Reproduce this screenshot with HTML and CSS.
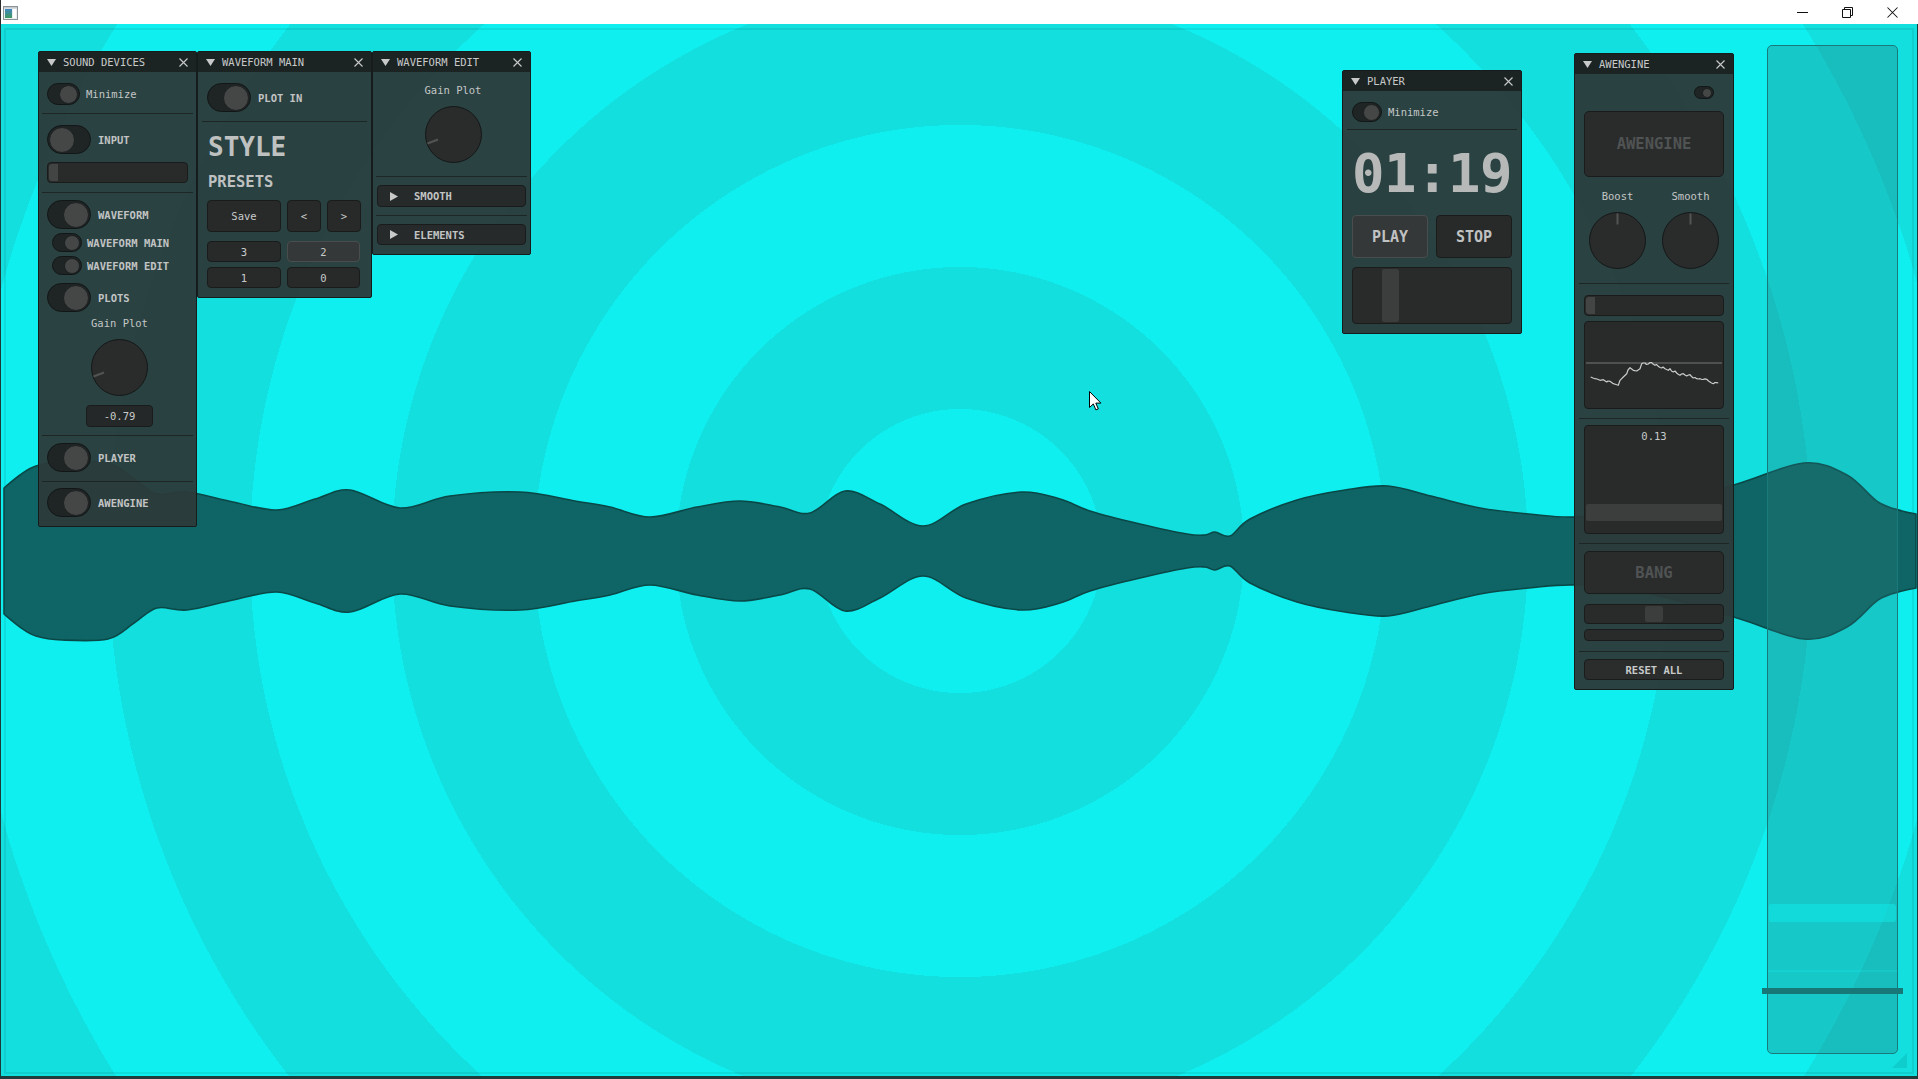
FILE: index.html
```html
<!DOCTYPE html>
<html>
<head>
<meta charset="utf-8">
<title>Sound</title>
<link rel="stylesheet" href="styles.css">
</head>
<body>
<div class="app">
  <div class="titlebar">
    <svg class="appicon" width="15" height="14" viewBox="0 0 15 14">
      <defs><linearGradient id="ig" x1="0" y1="0" x2="0" y2="1"><stop offset="0" stop-color="#3f86c0"/><stop offset="1" stop-color="#3f9a5e"/></linearGradient></defs>
      <rect x="0.5" y="0.5" width="14" height="13" fill="#e8eef2" stroke="#8c9296"/>
      <rect x="2" y="3" width="7" height="9" fill="url(#ig)"/>
      <rect x="10" y="3" width="3" height="9" fill="#ffffff"/>
      <rect x="1" y="1" width="13" height="1.5" fill="#c2cad0"/>
    </svg>
    <div class="winctl">
      <div class="wc"><svg width="11" height="11" viewBox="0 0 11 11"><path d="M0 5.5H11" stroke="#111" stroke-width="1"/></svg></div>
      <div class="wc"><svg width="11" height="11" viewBox="0 0 11 11"><path d="M0.5 2.5H8.5V10.5H0.5Z M2.5 2.5V0.5H10.5V8.5H8.5" fill="none" stroke="#111" stroke-width="1"/></svg></div>
      <div class="wc"><svg width="11" height="11" viewBox="0 0 11 11"><path d="M0.5 0.5L10.5 10.5M10.5 0.5L0.5 10.5" stroke="#111" stroke-width="1.05"/></svg></div>
    </div>
  </div>

  <div class="canvas">
    <div class="frame"></div>
    <svg class="wave" viewBox="0 24 1918 1052" preserveAspectRatio="none">
      <path id="wavepath" d="M0 0" fill="#0f6565" stroke="#0a4848" stroke-width="1.6" stroke-linejoin="round"/>
    </svg>

    <div class="track">
      <div class="thumbband"></div>
      <div class="tline"></div>
      <div class="tbar"></div>
    </div>

    <svg class="grip" width="15" height="15" viewBox="0 0 15 15"><path d="M15 0V15H0Z" fill="rgba(0,110,110,0.16)"/></svg>

    <!-- SOUND DEVICES -->
    <div class="panel p-sd">
      <div class="phead">
        <svg class="tri" width="9" height="7" viewBox="0 0 9 7"><path d="M0 0H9L4.5 7Z" fill="#c8caca"/></svg>
        <span class="ptitle">SOUND DEVICES</span>
        <svg class="pclose" width="9" height="9" viewBox="0 0 9 9"><path d="M0.5 0.5L8.5 8.5M8.5 0.5L0.5 8.5" stroke="#c8caca" stroke-width="1.1"/></svg>
      </div>
      <div class="pbody b-sd">
        <div class="row mt11"><div class="tg tg-s on"><span class="kn"></span></div><span class="lb">Minimize</span></div>
        <div class="sep sep-sd mt8"></div>
        <div class="row mt11"><div class="tg tg-l"><span class="kn"></span></div><span class="lb b lbl-l">INPUT</span></div>
        <div class="hslider mt8"><span class="hgrab"></span></div>
        <div class="sep sep-sd mt9"></div>
        <div class="row mt7"><div class="tg tg-l on"><span class="kn"></span></div><span class="lb b lbl-l">WAVEFORM</span></div>
        <div class="row sub mt4"><div class="tg tg-m on"><span class="kn"></span></div><span class="lb b">WAVEFORM MAIN</span></div>
        <div class="row sub mt4"><div class="tg tg-m on"><span class="kn"></span></div><span class="lb b">WAVEFORM EDIT</span></div>
        <div class="row mt8"><div class="tg tg-l on"><span class="kn"></span></div><span class="lb b lbl-l">PLOTS</span></div>
        <div class="clabel shift mt5">Gain Plot</div>
        <div class="knob shift mt10">
          <svg width="57" height="57" viewBox="0 0 57 57"><circle cx="28.5" cy="28.5" r="28" fill="#2a2c2c" stroke="#151717"/><path d="M2.5 37.5L13 33.5" stroke="#525454" stroke-width="2"/></svg>
        </div>
        <div class="valbox shift mt9">-0.79</div>
        <div class="sep sep-sd mt8"></div>
        <div class="row mt7"><div class="tg tg-l on"><span class="kn"></span></div><span class="lb b lbl-l">PLAYER</span></div>
        <div class="sep sep-sd mt9"></div>
        <div class="row mt6"><div class="tg tg-l on"><span class="kn"></span></div><span class="lb b lbl-l">AWENGINE</span></div>
      </div>
    </div>

    <!-- WAVEFORM MAIN -->
    <div class="panel p-wm">
      <div class="phead">
        <svg class="tri" width="9" height="7" viewBox="0 0 9 7"><path d="M0 0H9L4.5 7Z" fill="#c8caca"/></svg>
        <span class="ptitle">WAVEFORM MAIN</span>
        <svg class="pclose" width="9" height="9" viewBox="0 0 9 9"><path d="M0.5 0.5L8.5 8.5M8.5 0.5L0.5 8.5" stroke="#c8caca" stroke-width="1.1"/></svg>
      </div>
      <div class="pbody b-wm">
        <div class="row mt11"><div class="tg tg-l on"><span class="kn"></span></div><span class="lb b lbl-l">PLOT IN</span></div>
        <div class="sep sep-wm mt9"></div>
        <div class="style-h mt12">STYLE</div>
        <div class="presets mt14">PRESETS</div>
        <div class="btnrow mt10">
          <div class="btn btn-save">Save</div>
          <div class="btn btn-sq">&lt;</div>
          <div class="btn btn-sq">&gt;</div>
        </div>
        <div class="pgrid mt9">
          <div class="btn cell">3</div>
          <div class="btn cell hi">2</div>
          <div class="btn cell">1</div>
          <div class="btn cell">0</div>
        </div>
      </div>
    </div>

    <!-- WAVEFORM EDIT -->
    <div class="panel p-we">
      <div class="phead">
        <svg class="tri" width="9" height="7" viewBox="0 0 9 7"><path d="M0 0H9L4.5 7Z" fill="#c8caca"/></svg>
        <span class="ptitle">WAVEFORM EDIT</span>
        <svg class="pclose" width="9" height="9" viewBox="0 0 9 9"><path d="M0.5 0.5L8.5 8.5M8.5 0.5L0.5 8.5" stroke="#c8caca" stroke-width="1.1"/></svg>
      </div>
      <div class="pbody b-we">
        <div class="clabel shift3 mt12">Gain Plot</div>
        <div class="knob shift3 mt10">
          <svg width="57" height="57" viewBox="0 0 57 57"><circle cx="28.5" cy="28.5" r="28" fill="#2a2c2c" stroke="#151717"/><path d="M2.5 37.5L13 33.5" stroke="#525454" stroke-width="2"/></svg>
        </div>
        <div class="sep sep-we mt13"></div>
        <div class="coll coll-a mt8">
          <svg width="9" height="9" viewBox="0 0 9 9"><path d="M0 0L8 4.5L0 9Z" fill="#c8caca"/></svg>
          <span class="lb b">SMOOTH</span>
        </div>
        <div class="sep sep-we mt8"></div>
        <div class="coll mt8">
          <svg width="9" height="9" viewBox="0 0 9 9"><path d="M0 0L8 4.5L0 9Z" fill="#c8caca"/></svg>
          <span class="lb b">ELEMENTS</span>
        </div>
      </div>
    </div>

    <!-- PLAYER -->
    <div class="panel p-pl">
      <div class="phead">
        <svg class="tri" width="9" height="7" viewBox="0 0 9 7"><path d="M0 0H9L4.5 7Z" fill="#c8caca"/></svg>
        <span class="ptitle">PLAYER</span>
        <svg class="pclose" width="9" height="9" viewBox="0 0 9 9"><path d="M0.5 0.5L8.5 8.5M8.5 0.5L0.5 8.5" stroke="#c8caca" stroke-width="1.1"/></svg>
      </div>
      <div class="pbody b-pl">
        <div class="row mt11"><div class="tg tg-p on"><span class="kn"></span></div><span class="lb">Minimize</span></div>
        <div class="sep sep-pl mt7"></div>
        <div class="clock mt17">01:19</div>
        <div class="btnrow2 mt14">
          <div class="btn pbtn hi">PLAY</div>
          <div class="btn pbtn">STOP</div>
        </div>
        <div class="pslider mt9"><span class="pgrab"></span></div>
      </div>
    </div>

    <!-- AWENGINE -->
    <div class="panel p-aw">
      <div class="phead">
        <svg class="tri" width="9" height="7" viewBox="0 0 9 7"><path d="M0 0H9L4.5 7Z" fill="#c8caca"/></svg>
        <span class="ptitle">AWENGINE</span>
        <svg class="pclose" width="9" height="9" viewBox="0 0 9 9"><path d="M0.5 0.5L8.5 8.5M8.5 0.5L0.5 8.5" stroke="#c8caca" stroke-width="1.1"/></svg>
      </div>
      <div class="pbody b-aw">
        <div class="tgrow mt12"><div class="tg tg-xs on"><span class="kn"></span></div></div>
        <div class="bigbox bb-aw mt12">AWENGINE</div>
        <div class="knobs mt13">
          <div class="kcol">
            <div class="clabel">Boost</div>
            <div class="knob mt10"><svg width="57" height="57" viewBox="0 0 57 57"><circle cx="28.5" cy="28.5" r="28" fill="#2a2c2c" stroke="#151717"/><path d="M28.5 1.5V12.5" stroke="#525454" stroke-width="2"/></svg></div>
          </div>
          <div class="kcol">
            <div class="clabel">Smooth</div>
            <div class="knob mt10"><svg width="57" height="57" viewBox="0 0 57 57"><circle cx="28.5" cy="28.5" r="28" fill="#2a2c2c" stroke="#151717"/><path d="M28.5 1.5V12.5" stroke="#525454" stroke-width="2"/></svg></div>
          </div>
        </div>
        <div class="sep sep-aw mt14"></div>
        <div class="hslider mt11"><span class="hgrab"></span></div>
        <div class="plot mt5">
          <svg class="plotsvg" width="139" height="88" viewBox="0 0 139 88">
            <path d="M2 42H138" stroke="#4f5151" stroke-width="2"/>
            <polyline fill="none" stroke="#c9cbcb" stroke-width="1.2" stroke-linejoin="round" points="6.7,56 9,57 11,57.7 13,58 16,59.3 19.3,58.7 22.7,61 24,60 26,60.3 29.3,62.7 32,63.5 34.3,64.3 36,59.3 39.3,56 42.7,52.7 44,49 46,46.7 49.3,49.3 52.7,50 56,47.7 57.7,42.7 59,42 61,42 62.5,43.5 64.3,43 66,41.5 67.7,41.7 69,43 71,44.3 72.5,43.5 74.3,45.3 76,46.5 77.7,47 79,46 81,47.7 82.5,48.5 84.3,49.3 86,47.7 87.5,50 89.3,51 91,50 92.7,52 94.5,53.5 96,54.3 97.5,53 99.3,52.7 101,54 102.7,55 104.5,54 106,53.7 107.5,55.5 109.3,57 111,56.5 112.7,57.7 114.5,58 116,57.7 118,58.5 119.3,58.3 121,57.8 122.7,58.3 124.5,60 126,61 127.5,62 129.3,62.7 131,61.5 132.7,61.7 134.3,62"/>
          </svg>
        </div>
        <div class="sep sep-aw mt9"></div>
        <div class="vslider mt6"><span class="vval">0.13</span><span class="vgrab"></span></div>
        <div class="sep sep-aw mt9"></div>
        <div class="bigbox bb-bang mt7">BANG</div>
        <div class="hslider2 mt10"><span class="cgrab"></span></div>
        <div class="thinbar mt5"></div>
        <div class="sep sep-aw mt10"></div>
        <div class="btn resetbtn mt7">RESET ALL</div>
      </div>
    </div>

    <svg class="cursor" width="13" height="21" viewBox="0 0 13 21"><path d="M0.5 0.5L0.5 16.5L4.3 12.9L6.9 18.9L9.3 17.9L6.8 12.1L11.9 12.1Z" fill="#ffffff" stroke="#000000" stroke-width="1" stroke-linejoin="miter"/></svg>
  </div>
</div>
<script src="app.js"></script>
</body>
</html>
```

FILE: styles.css
```css
* { box-sizing: border-box; margin: 0; padding: 0; }

html, body {
  width: 1918px;
  height: 1079px;
  overflow: hidden;
  background: #ffffff;
}

body {
  font-family: "DejaVu Sans Mono", "Liberation Mono", monospace;
  color: #c4c6c6;
}

.app {
  width: 1918px;
  height: 1079px;
  display: flex;
  flex-direction: column;
}

/* ---------- title bar ---------- */
.titlebar {
  height: 24px;
  flex: none;
  background: #ffffff;
  border-left: 1px solid #2b2b2b;
  display: flex;
  align-items: center;
  justify-content: space-between;
}

.appicon {
  margin-left: 2px;
  margin-top: 1px;
}

.winctl {
  display: flex;
  height: 24px;
  padding-right: 3px;
}

.wc {
  width: 45px;
  height: 24px;
  display: flex;
  align-items: center;
  justify-content: center;
}

/* ---------- canvas ---------- */
.canvas {
  position: relative;
  flex: 1;
  overflow: hidden;
  border-left: 1px solid #1d3a3a;
  border-right: 1px solid #1d3a3a;
  border-bottom: 3px solid #1f3c3c;
  background: repeating-radial-gradient(circle at 959px 527px,
      #0fefef 0, #0fefef 142px, #13dfdf 142px, #13dfdf 284px);
}

.frame {
  position: absolute;
  left: 3px;
  top: 4px;
  right: 3px;
  bottom: 2px;
  border: 2px solid rgba(0, 90, 90, 0.12);
}

.wave {
  position: absolute;
  left: -1px;
  top: 0;
  width: 1918px;
  height: 1052px;
}

.grip {
  position: absolute;
  left: 1891px;
  top: 1029px;
}

.cursor {
  position: absolute;
  left: 1088px;
  top: 367px;
}

/* ---------- big right slider ---------- */
.track {
  position: absolute;
  left: 1766px;
  top: 21px;
  width: 131px;
  height: 1009px;
  background: rgba(37, 121, 121, 0.33);
  border: 1px solid #1a7a7a;
  border-radius: 5px;
}

.thumbband {
  position: absolute;
  left: 1px;
  right: 1px;
  top: 858px;
  height: 18px;
  border-radius: 2px;
  background: rgba(16, 240, 240, 0.45);
}

.tline {
  position: absolute;
  left: 0;
  right: 0;
  top: 924px;
  height: 2px;
  background: rgba(16, 240, 240, 0.22);
}

.tbar {
  position: absolute;
  left: -6px;
  width: 141px;
  top: 942px;
  height: 6px;
  background: #187878;
}

/* ---------- panels ---------- */
.panel {
  position: absolute;
  background: rgba(44, 58, 58, 0.96);
  border: 1px solid #161b1b;
  border-radius: 2px;
  display: flex;
  flex-direction: column;
}

.p-sd { left: 37px;  top: 27px; width: 159px; }
.p-wm { left: 196px; top: 27px; width: 175px; }
.p-we { left: 371px; top: 27px; width: 159px; }
.p-pl { left: 1341px; top: 46px; width: 180px; }
.p-aw { left: 1573px; top: 29px; width: 160px; }

.phead {
  height: 20px;
  flex: none;
  background: #1c2323;
  display: flex;
  align-items: center;
  gap: 7px;
  padding: 0 8px;
  font-size: 10.5px;
  color: #c8caca;
}

.ptitle { white-space: nowrap; }
.pclose { margin-left: auto; }

.pbody {
  display: flex;
  flex-direction: column;
}

.b-sd { padding: 0 8px 9px 8px; }
.b-wm { padding: 0 9px 9px 9px; }
.b-we { padding: 0 4px 9px 4px; }
.b-pl { padding: 0 9px 9px 9px; }
.b-aw { padding: 0 9px 9px 9px; }

.mt4 { margin-top: 4px; }
.mt5 { margin-top: 5px; }
.mt6 { margin-top: 6px; }
.mt7 { margin-top: 7px; }
.mt8 { margin-top: 8px; }
.mt9 { margin-top: 9px; }
.mt10 { margin-top: 10px; }
.mt11 { margin-top: 11px; }
.mt12 { margin-top: 12px; }
.mt13 { margin-top: 13px; }
.mt14 { margin-top: 14px; }
.mt17 { margin-top: 17px; }

.sep {
  height: 1px;
  flex: none;
  background: #1d2525;
}
.sep-sd { margin-left: -5px; margin-right: -5px; }
.sep-wm { margin-left: -5px; margin-right: -5px; }
.sep-we { margin-left: -1px; margin-right: -1px; }
.sep-pl { margin-left: -5px; margin-right: -5px; }
.sep-aw { margin-left: -5px; margin-right: -5px; }

/* rows & labels */
.row {
  display: flex;
  align-items: center;
  gap: 6px;
}
.row.sub { padding-left: 5px; gap: 5px; }

.lb {
  font-size: 10.5px;
  line-height: 12px;
  color: #c4c6c6;
  white-space: nowrap;
}
.lb.b { font-weight: bold; color: #c2c4c4; }
.lbl-l { margin-left: 1px; }

.clabel {
  font-size: 10.5px;
  line-height: 12px;
  text-align: center;
  color: #c4c6c6;
}

.shift { align-self: center; margin-left: 4px; }
.shift3 { align-self: center; margin-left: 3px; }

/* toggles */
.tg {
  flex: none;
  display: flex;
  align-items: center;
  border-radius: 20px;
  background: #1f2424;
  border: 1px solid #121616;
  padding: 0 1px;
}
.tg.on { justify-content: flex-end; }
.kn {
  display: block;
  border-radius: 50%;
  background: #454747;
  border: 1px solid #1e2121;
}
.tg-s { width: 33px; height: 22px; }
.tg-s .kn { width: 19px; height: 19px; }
.tg-l { width: 44px; height: 29px; }
.tg-l .kn { width: 26px; height: 26px; }
.tg-m { width: 30px; height: 19px; }
.tg-m .kn { width: 16px; height: 16px; }
.tg-p { width: 30px; height: 20px; }
.tg-p .kn { width: 17px; height: 17px; }
.tg-xs { width: 20px; height: 13px; }
.tg-xs .kn { width: 10px; height: 10px; }

/* knobs */
.knob {
  width: 57px;
  height: 57px;
  flex: none;
}
.knob svg { display: block; }

/* generic widget boxes */
.hslider, .hslider2, .thinbar, .valbox, .btn, .pslider, .plot, .vslider, .bigbox, .coll {
  background: #292b2b;
  border: 1px solid #1a1c1c;
  border-radius: 4px;
}

.hslider {
  height: 21px;
  padding: 1px;
  display: flex;
}
.hgrab {
  width: 9px;
  background: #434545;
  border-radius: 3px 0 0 3px;
}

.valbox {
  width: 67px;
  height: 22px;
  display: flex;
  align-items: center;
  justify-content: center;
  font-size: 10.5px;
  color: #c8caca;
  background: #252828;
}

/* waveform main */
.style-h {
  font-size: 26px;
  line-height: 26px;
  font-weight: bold;
  color: #bfc1c1;
  margin-left: 1px;
}
.presets {
  font-size: 15.5px;
  line-height: 16px;
  font-weight: bold;
  color: #bfc1c1;
  margin-left: 1px;
}

.btn {
  display: flex;
  align-items: center;
  justify-content: center;
  font-size: 10.5px;
  color: #c8caca;
  background: #282a2a;
}
.btn.hi {
  background: #353838;
  border-color: #4a4d4d;
}

.btnrow {
  display: flex;
  gap: 6px;
  height: 32px;
}
.btn-save { width: 74px; }
.btn-sq { width: 34px; }

.pgrid {
  display: grid;
  grid-template-columns: 74px 73px;
  grid-auto-rows: 21px;
  column-gap: 6px;
  row-gap: 5px;
}

/* waveform edit */
.coll {
  height: 22px;
  display: flex;
  align-items: center;
  gap: 15px;
  padding-left: 12px;
  background: #262a2a;
}
.coll svg { flex: none; }
.coll + .sep + .coll { height: 21px; }

/* player */
.clock {
  font-size: 54px;
  line-height: 54px;
  font-weight: bold;
  text-align: center;
  color: #b7b9b9;
  letter-spacing: -0.5px;
}
.btnrow2 {
  display: flex;
  gap: 8px;
  height: 43px;
}
.pbtn {
  width: 76px;
  font-size: 15px;
  font-weight: bold;
  color: #c0c2c2;
}
.pslider {
  height: 57px;
  padding: 1px 0 1px 29px;
  display: flex;
}
.pgrab {
  width: 17px;
  background: #3c3e3e;
  border-radius: 2px;
}

/* awengine */
.tgrow {
  display: flex;
  justify-content: flex-end;
  padding-right: 10px;
}
.bigbox {
  display: flex;
  align-items: center;
  justify-content: center;
  font-size: 15.5px;
  font-weight: bold;
  color: #505353;
  background: #2a2c2c;
  border-radius: 5px;
}
.bb-aw { height: 66px; }
.bb-bang { height: 43px; }

.knobs {
  display: flex;
  justify-content: space-between;
  padding: 0 5px;
}
.kcol {
  display: flex;
  flex-direction: column;
  align-items: center;
}

.plot {
  position: relative;
  height: 88px;
}
.plotsvg {
  position: absolute;
  left: -1px;
  top: -1px;
}

.vslider {
  height: 109px;
  display: flex;
  flex-direction: column;
  align-items: stretch;
  padding: 4px 1px 12px 1px;
}
.vval {
  font-size: 10.5px;
  line-height: 12px;
  text-align: center;
  color: #c8caca;
}
.vgrab {
  margin-top: auto;
  height: 17px;
  background: #3c3e3e;
  border-radius: 2px;
}

.hslider2 {
  height: 20px;
  display: flex;
  justify-content: center;
  padding: 1px 0;
}
.cgrab {
  width: 18px;
  background: #3c3e3e;
  border-radius: 2px;
}
.thinbar {
  height: 12px;
}
.resetbtn {
  height: 21px;
  font-weight: bold;
  background: #2b2d2d;
}
```

FILE: app.js
```js
(function () {
  var pts = [
    [4, 63], [20, 76], [36, 85], [62, 89], [108, 88], [134, 72], [157, 57], [187, 59],
    [233, 49], [277, 41], [315, 52], [350, 61], [400, 43], [450, 55], [520, 59], [575, 50],
    [610, 44], [650, 34], [697, 44], [740, 50], [780, 44], [810, 38], [845, 60], [880, 47],
    [923, 25], [966, 47], [1021, 59], [1060, 52], [1090, 40], [1140, 27], [1187, 17],
    [1205, 16], [1215, 19], [1230, 15], [1250, 32], [1297, 51], [1345, 61], [1388, 65],
    [1431, 55], [1480, 43], [1529, 37], [1578, 34], [1651, 43], [1737, 67], [1804, 88],
    [1847, 76], [1878, 49], [1902, 40], [1916, 37]
  ];
  var cy = 551;
  function f(n) { return n.toFixed(1); }
  function cr(p) {
    var d = '';
    for (var i = 0; i < p.length - 1; i++) {
      var p0 = p[i - 1] || p[i], p1 = p[i], p2 = p[i + 1], p3 = p[i + 2] || p2;
      var c1x = p1[0] + (p2[0] - p0[0]) / 6, c1y = p1[1] + (p2[1] - p0[1]) / 6;
      var c2x = p2[0] - (p3[0] - p1[0]) / 6, c2y = p2[1] - (p3[1] - p1[1]) / 6;
      d += ' C' + f(c1x) + ' ' + f(c1y) + ' ' + f(c2x) + ' ' + f(c2y) + ' ' + f(p2[0]) + ' ' + f(p2[1]);
    }
    return d;
  }
  var top = pts.map(function (q) { return [q[0], cy - q[1]]; });
  var bot = pts.slice().reverse().map(function (q) { return [q[0], cy + q[1]]; });
  var d = 'M' + f(top[0][0]) + ' ' + f(top[0][1]) + cr(top) +
    ' L' + f(bot[0][0]) + ' ' + f(bot[0][1]) + cr(bot) + ' Z';
  var el = document.getElementById('wavepath');
  if (el) el.setAttribute('d', d);
})();
```
